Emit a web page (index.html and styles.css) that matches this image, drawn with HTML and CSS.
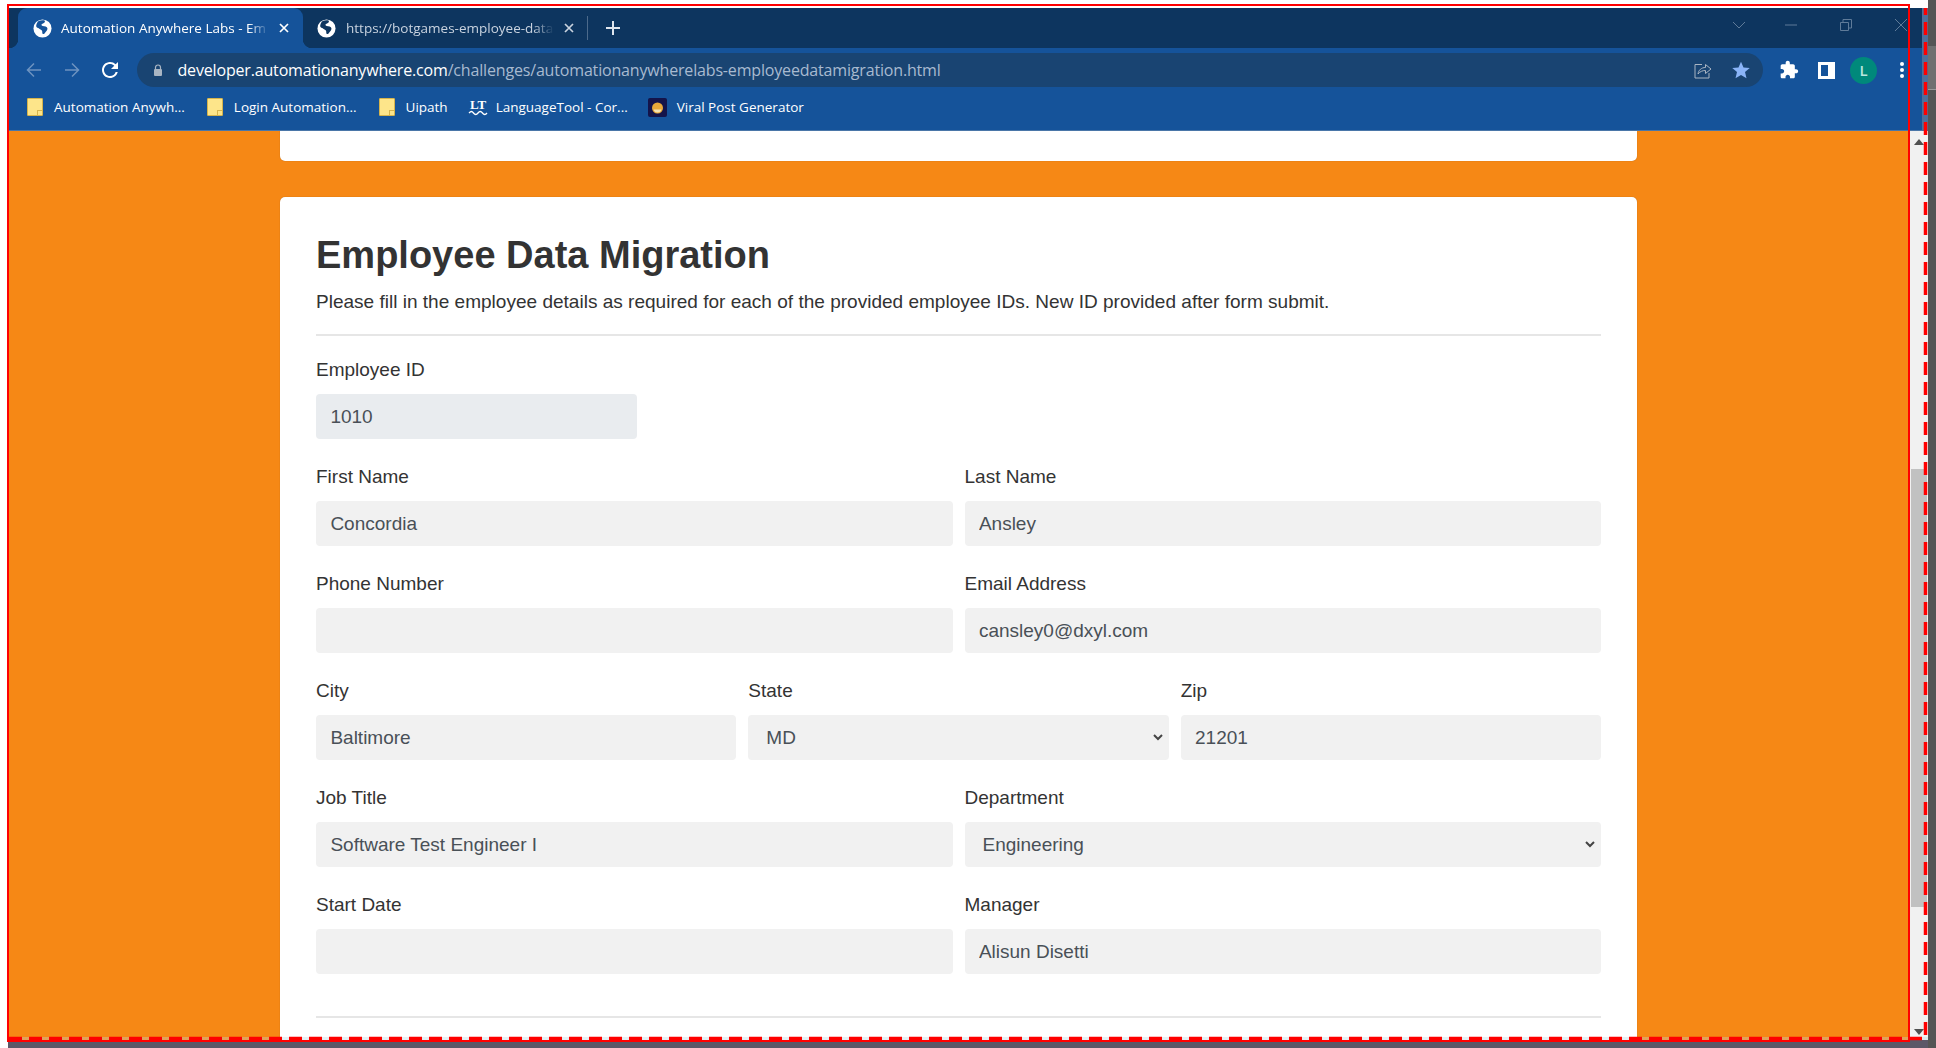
FILE: index.html
```html
<!DOCTYPE html>
<html lang="en">
<head>
  <meta charset="UTF-8">
  <title>Automation Anywhere Labs - Employee Data Migration</title>
  <link rel="stylesheet" href="styles.css">
</head>
<body>
  <div id="screen">
    <div id="desktop">
      <div id="window">
        <div id="chrome-row">
          <div id="chrome">
            <div id="tabstrip">
              <div class="tab active">
                <svg class="globe" viewBox="0 0 20 20"><circle cx="10" cy="10" r="9.5" fill="#fff"/><path d="M6 2.2c2-1 5-1 6.500-.4.500 1.500-1.200 2.800-2.500 3.200-1.500.4-1.500 1.900.2 2.300 2 .4 4.700.5 5 2.500.3 2-1.500 3.200-2.500 4.700-.6 1-1.400 1.700-2.300 1.200-.9-.6-.5-2-.8-3.200-.3-1.300-2-1.500-3-2.300-1.200-.9-3.200-1-3.300-2.800C3.700 5 4.500 3.200 6 2.200z" fill="#15539a"/></svg>
                <span class="tab-title">Automation Anywhere Labs - Em</span>
                <svg class="tab-close" viewBox="0 0 12 12"><path d="M2 2l8 8M10 2l-8 8" stroke="#fff" stroke-width="1.700"/></svg>
              </div>
              <div class="tab">
                <svg class="globe" viewBox="0 0 20 20"><circle cx="10" cy="10" r="9.500" fill="#fff"/><path d="M6 2.200c2-1 5-1 6.500-.4.500 1.500-1.200 2.800-2.500 3.200-1.500.4-1.500 1.900.2 2.300 2 .4 4.700.5 5 2.500.3 2-1.500 3.200-2.500 4.700-.6 1-1.400 1.700-2.300 1.200-.9-.6-.5-2-.8-3.200-.3-1.300-2-1.500-3-2.300-1.200-.9-3.200-1-3.300-2.800C3.700 5 4.500 3.200 6 2.200z" fill="#0d355f"/></svg>
                <span class="tab-title">https://botgames-employee-data</span>
                <svg class="tab-close" viewBox="0 0 12 12"><path d="M2 2l8 8M10 2l-8 8" stroke="#c9d3df" stroke-width="1.700"/></svg>
              </div>
              <div class="tab-divider"></div>
              <svg class="new-tab" viewBox="0 0 14 14"><path d="M7 0v14M0 7h14" stroke="#dfe6ee" stroke-width="2"/></svg>
              <div class="win-controls">
                <svg viewBox="0 0 14 8" class="win-chevron"><path d="M1 1l6 6 6-6" fill="none" stroke="#5f7b99" stroke-width="1"/></svg>
                <svg viewBox="0 0 12 12" class="win-btn"><path d="M0 6h12" stroke="#5f7b99" stroke-width="1"/></svg>
                <svg viewBox="0 0 12 12" class="win-btn"><path d="M.5 3.500h8v8h-8zM3 3.500V.5h8.500V9H8.500" fill="none" stroke="#5f7b99" stroke-width="1"/></svg>
                <svg viewBox="0 0 12 12" class="win-btn"><path d="M0 0l12 12M12 0L0 12" stroke="#5f7b99" stroke-width="1"/></svg>
              </div>
            </div>

            <div id="toolbar">
              <svg class="nav-icon" viewBox="0 0 16 16"><path d="M15 8H2M8 1.500L1.500 8 8 14.500" fill="none" stroke="#6d93c0" stroke-width="1.500"/></svg>
              <svg class="nav-icon" viewBox="0 0 16 16"><path d="M1 8h13M8 1.500L14.500 8 8 14.500" fill="none" stroke="#6d93c0" stroke-width="1.500"/></svg>
              <svg class="nav-icon reload" viewBox="0 0 24 24"><path d="M17.650 6.350A7.958 7.958 0 0 0 12 4c-4.420 0-7.990 3.580-7.990 8s3.570 8 7.990 8c3.730 0 6.840-2.550 7.730-6h-2.080A5.990 5.990 0 0 1 12 18c-3.310 0-6-2.690-6-6s2.690-6 6-6c1.660 0 3.140.69 4.220 1.780L13 11h7V4l-2.350 2.350z" fill="#fff"/></svg>
              <div id="omnibox">
                <svg class="lock" viewBox="0 0 10 12"><path d="M2.500 5V3.500a2.500 2.500 0 0 1 5 0V5" fill="none" stroke="#a9b5c3" stroke-width="1.200"/><rect x="1" y="5" width="8" height="7" rx="1" fill="#a9b5c3"/></svg>
                <span class="url"><span class="url-host">developer.automationanywhere.com</span>/challenges/automationanywherelabs-employeedatamigration.html</span>
                <svg class="share" viewBox="0 0 18 17"><path d="M8 2.500H1v13.500h14v-5" fill="none" stroke="#a9b5c3" stroke-width="1"/><path d="M4 12c.5-4 3.500-6.500 7.500-6.500V2.500L17 7l-5.500 4.500V8.500C8.500 8.500 6 9.500 4 12z" fill="none" stroke="#a9b5c3" stroke-width="1"/></svg>
                <svg class="star" viewBox="0 0 24 24"><path d="M12 2l3 7 7.500.6-5.700 4.900 1.800 7.400L12 18l-6.600 3.900 1.800-7.400L1.500 9.600 9 9z" fill="#8ab4f8"/></svg>
              </div>
              <svg class="puzzle" viewBox="0 0 24 24"><path d="M20.500 11H19V7c0-1.100-.9-2-2-2h-4V3.500C13 2.120 11.880 1 10.500 1S8 2.120 8 3.500V5H4c-1.100 0-1.990.9-1.990 2v3.800H3.500c1.490 0 2.700 1.210 2.700 2.700s-1.210 2.700-2.700 2.700H2V20c0 1.100.9 2 2 2h3.800v-1.500c0-1.490 1.210-2.700 2.700-2.700 1.490 0 2.700 1.210 2.700 2.700V22H17c1.100 0 2-.9 2-2v-4h1.500c1.380 0 2.500-1.120 2.500-2.500S21.880 11 20.500 11z" fill="#fff"/></svg>
              <div class="side-panel"></div>
              <div class="avatar">L</div>
              <div class="menu-dots"><span></span><span></span><span></span></div>
            </div>

            <div id="bookmarks">
              <a class="bookmark"><span class="folder"></span>Automation Anywh...</a>
              <a class="bookmark"><span class="folder"></span>Login Automation...</a>
              <a class="bookmark"><span class="folder"></span>Uipath</a>
              <a class="bookmark bookmark-lt">
                <svg class="lt-icon" viewBox="0 0 20 18"><text x="10" y="11" text-anchor="middle" class="lt-text">LT</text><path d="M1 15c2-2 3-2 4.500 0s3 2 4.500 0 3-2 4.500 0 3 2 4.500 0" fill="none" stroke="#fff" stroke-width="1.300"/></svg>
                LanguageTool - Cor...
              </a>
              <a class="bookmark bookmark-viral">
                <svg class="viral-icon" viewBox="0 0 19 19"><rect width="19" height="19" rx="2" fill="#14144a"/><circle cx="9.500" cy="10" r="5.500" fill="#e9a93a"/><path d="M5.500 11.500h8c-.5 2-2 3-4 3s-3.500-1-4-3z" fill="#f5e3b0"/></svg>
                Viral Post Generator
              </a>
            </div>
          </div>
          <div id="chrome-edge"></div>
        </div>

        <div id="viewport">
          <div id="page">
            <div class="card card-stub"></div>
            <div class="card">
              <h1>Employee Data Migration</h1>
              <p class="lead">Please fill in the employee details as required for each of the provided employee IDs. New ID provided after form submit.</p>
              <hr>
              <form>
                <div class="form-row">
                  <div class="field quarter">
                    <label>Employee ID</label>
                    <input class="readonly" type="text" value="1010" readonly>
                  </div>
                </div>
                <div class="form-row">
                  <div class="field"><label>First Name</label><input type="text" value="Concordia"></div>
                  <div class="field"><label>Last Name</label><input type="text" value="Ansley"></div>
                </div>
                <div class="form-row">
                  <div class="field"><label>Phone Number</label><input type="text"></div>
                  <div class="field"><label>Email Address</label><input type="text" value="cansley0@dxyl.com"></div>
                </div>
                <div class="form-row">
                  <div class="field"><label>City</label><input type="text" value="Baltimore"></div>
                  <div class="field"><label>State</label><select><option>MD</option></select></div>
                  <div class="field"><label>Zip</label><input type="text" value="21201"></div>
                </div>
                <div class="form-row">
                  <div class="field"><label>Job Title</label><input type="text" value="Software Test Engineer I"></div>
                  <div class="field"><label>Department</label><select><option>Engineering</option></select></div>
                </div>
                <div class="form-row">
                  <div class="field"><label>Start Date</label><input type="text"></div>
                  <div class="field"><label>Manager</label><input type="text" value="Alisun Disetti"></div>
                </div>
              </form>
              <hr class="form-end">
            </div>
          </div>
          <div id="scrollbar">
            <span class="arrow-up"></span>
            <div class="thumb"></div>
            <span class="arrow-down"></span>
          </div>
          <div class="bottom-haze"></div>
        </div>
      </div>
      <div id="taskbar"></div>
    </div>
    <div id="screen-edge"><div class="edge-light"></div></div>
  </div>

  <!-- annotation outlines drawn over the capture -->
  <svg id="outlines" viewBox="0 0 1936 1048">
    <rect x="8" y="5" width="1901" height="1036" fill="none" stroke="#f00" stroke-width="2"/>
    <path d="M9 1038.500H1925.500V8" fill="none" stroke="#f00" stroke-width="3.500" stroke-dasharray="13 7"/>
  </svg>
</body>
</html>
```

FILE: styles.css
```css
* {
  box-sizing: border-box;
}

body {
  margin: 0;
  width: 1936px;
  height: 1048px;
  overflow: hidden;
  background: #fff;
  font-family: 'Liberation Sans', Arial, sans-serif;
  position: relative;
}

#screen {
  display: flex;
  height: 1048px;
}

#desktop {
  width: 1928px;
  padding-top: 8px;
  display: flex;
  flex-direction: column;
}

#window {
  margin-left: 9px;
  height: 1032px;
  display: flex;
  flex-direction: column;
  overflow: hidden;
}

#taskbar {
  flex: 1;
  margin-left: 8px;
  background: #5b5868;
}

#screen-edge {
  width: 8px;
  background: #555;
  padding-top: 46px;
}

.edge-light {
  height: 44px;
  background: #707070;
  border-bottom: 1px solid #999;
}

/* browser chrome */
#chrome-row {
  display: flex;
  height: 123px;
}

#chrome {
  flex: 1;
  display: flex;
  flex-direction: column;
  background: #15539a;
  font-family: 'Open Sans', 'Noto Sans', sans-serif;
}

#chrome-edge {
  width: 6px;
  background: #4d6f9b;
}

#tabstrip {
  height: 40px;
  background: #0d355f;
  display: flex;
  align-items: center;
  padding-left: 9px;
}

.tab {
  width: 285px;
  height: 40px;
  display: flex;
  align-items: center;
  padding-left: 14px;
  flex-shrink: 0;
  color: #c9d3df;
  position: relative;
}

.tab.active {
  background: #15539a;
  border-radius: 9px 9px 0 0;
  color: #fff;
  padding-left: 15px;
}

.tab.active::before,
.tab.active::after {
  content: "";
  position: absolute;
  bottom: 0;
  width: 9px;
  height: 9px;
}

.tab.active::before {
  left: -9px;
  background: radial-gradient(circle at 0 0, #0d355f 9px, #15539a 9.5px);
}

.tab.active::after {
  right: -9px;
  background: radial-gradient(circle at 100% 0, #0d355f 9px, #15539a 9.5px);
}

.tab + .tab {
  width: 284px;
  padding-left: 14px;
}

.globe {
  width: 19px;
  height: 19px;
  flex-shrink: 0;
}

.tab-title {
  width: 208px;
  margin-left: 9px;
  font-size: 13.5px;
  white-space: nowrap;
  overflow: hidden;
  mask-image: linear-gradient(to right, #000 90%, transparent);
}

.tab + .tab .tab-title {
  margin-left: 10px;
}

.tab-close {
  width: 12px;
  height: 12px;
  margin-left: 9px;
  flex-shrink: 0;
}

.tab-divider {
  width: 1px;
  height: 24px;
  background: #4c6a8b;
}

.new-tab {
  width: 14px;
  height: 14px;
  margin-left: 18px;
}

.win-controls {
  margin-left: auto;
  display: flex;
  align-items: center;
  padding-right: 15px;
  gap: 43px;
  margin-top: -6px;
}

.win-chevron {
  width: 14px;
  height: 8px;
  margin-right: -4px;
}

.win-btn {
  width: 12px;
  height: 12px;
}

#toolbar {
  height: 39px;
  display: flex;
  align-items: center;
  padding: 5px 0 0 17px;
}

.nav-icon {
  width: 16px;
  height: 16px;
  margin-right: 22px;
  flex-shrink: 0;
}

.nav-icon.reload {
  width: 24px;
  height: 24px;
  margin: 0 0 0 -4px;
  flex-shrink: 0;
}

#omnibox {
  width: 1626px;
  height: 34px;
  margin-left: 15px;
  border-radius: 17px;
  background: #194472;
  display: flex;
  align-items: center;
  padding-left: 16px;
  flex-shrink: 0;
}

.lock {
  width: 10px;
  height: 12px;
  flex-shrink: 0;
}

.url {
  margin-left: 14.5px;
  font-size: 16px;
  letter-spacing: -0.17px;
  color: #a8bad0;
  white-space: nowrap;
}

.url-host {
  color: #fff;
}

.share {
  width: 18px;
  height: 17px;
  margin-left: auto;
}

.star {
  width: 20px;
  height: 20px;
  margin: 0 12px 0 19px;
}

.puzzle {
  width: 20px;
  height: 20px;
  margin-left: 16px;
  flex-shrink: 0;
}

.side-panel {
  width: 17px;
  height: 17px;
  margin-left: 19px;
  border: 3px solid #fff;
  border-right-width: 7px;
  flex-shrink: 0;
}

.avatar {
  width: 27px;
  height: 27px;
  margin-left: 15px;
  border-radius: 50%;
  background: #00897b;
  color: #b9e6df;
  font-size: 15px;
  font-weight: 600;
  text-align: center;
  line-height: 27px;
  flex-shrink: 0;
}

.menu-dots {
  margin-left: 23px;
  display: flex;
  flex-direction: column;
  gap: 2px;
}

.menu-dots span {
  width: 4px;
  height: 4px;
  border-radius: 50%;
  background: #fff;
}

#bookmarks {
  height: 44px;
  display: flex;
  align-items: center;
  padding: 0 0 3px 18px;
  border-bottom: 1px solid #4a76a8;
  gap: 22px;
}

.bookmark {
  display: flex;
  align-items: center;
  gap: 11px;
  font-size: 13.5px;
  color: #fff;
  white-space: nowrap;
}

.bookmark-lt {
  margin-left: -2px;
  gap: 8px;
}

.bookmark-viral {
  margin-left: -2px;
  gap: 10px;
}

.folder {
  width: 16px;
  height: 18px;
  background: #fde58a;
  border: 1px solid #d6b44c;
  border-radius: 1px;
  flex-shrink: 0;
  position: relative;
}

.folder::after {
  content: "";
  position: absolute;
  right: 0;
  bottom: 0;
  width: 4px;
  height: 4px;
  border-left: 1px solid #d6b44c;
  border-top: 1px solid #d6b44c;
}

.lt-icon {
  width: 20px;
  height: 18px;
}

.lt-text {
  font-family: 'Liberation Serif', serif;
  font-size: 13px;
  font-weight: 700;
  fill: #fff;
}

.viral-icon {
  width: 19px;
  height: 19px;
}

/* page */
#viewport {
  flex: 1;
  display: flex;
  position: relative;
  min-height: 0;
}

#page {
  flex: 1;
  background: #f68815;
  overflow: hidden;
  padding-left: 271px;
}

.card {
  width: 1357px;
  background: #fff;
  border-radius: 5px;
  padding: 36px;
  color: #333;
  box-shadow: 0 0 1px rgba(0, 0, 0, 0.35);
}

.card-stub {
  height: 30px;
  padding: 0;
  border-radius: 0 0 5px 5px;
  margin-bottom: 36px;
}

h1 {
  margin: 1px 0 0;
  font-size: 38px;
  line-height: 42px;
  font-weight: 700;
}

.lead {
  margin: 13px 0 0;
  font-size: 19.04px;
  line-height: 26px;
}

hr {
  margin: 19px 0 20px;
  border: 0;
  border-top: 2px solid #e6e6e6;
}

.form-end {
  margin: 42px 0 0;
}

.form-row {
  display: flex;
  gap: 12px;
  margin-bottom: 24px;
}

.field {
  flex: 1;
  min-width: 0;
}

.field.quarter {
  flex: 0 0 321px;
}

label {
  display: block;
  padding-top: 1px;
  margin-bottom: 11px;
  font-size: 19px;
  line-height: 26px;
}

input,
select {
  display: block;
  width: 100%;
  height: 45px;
  border: 0;
  border-radius: 4px;
  background-color: #f1f1f1;
  color: #495057;
  font-family: inherit;
  font-size: 19px;
  padding: 0 14.4px;
}

select {
  padding: 0 0 0 18px;
  appearance: none;
  background-image: url("data:image/svg+xml,%3Csvg xmlns='http://www.w3.org/2000/svg' width='10' height='7'%3E%3Cpath d='M1 1l4 4 4-4' fill='none' stroke='%23444' stroke-width='2'/%3E%3C/svg%3E");
  background-repeat: no-repeat;
  background-position: right 6px center;
}

input.readonly {
  background-color: #e9ecef;
}

#scrollbar {
  width: 18px;
  background: #f1f1f1;
  display: flex;
  flex-direction: column;
  align-items: center;
  padding: 8px 1px 5px 0;
  position: relative;
}

.thumb {
  position: absolute;
  top: 338px;
  left: 1px;
  width: 16px;
  height: 438px;
  background: #c1c1c1;
}

.arrow-up,
.arrow-down {
  width: 0;
  height: 0;
  border-left: 5px solid transparent;
  border-right: 5px solid transparent;
}

.arrow-up {
  border-bottom: 6px solid #505050;
}

.arrow-down {
  margin-top: auto;
  border-top: 6px solid #505050;
}

.bottom-haze {
  position: absolute;
  left: 0;
  right: 0;
  bottom: 0;
  height: 3px;
  background: rgba(184, 216, 224, 0.35);
}

#outlines {
  position: absolute;
  left: 0;
  top: 0;
  width: 1936px;
  height: 1048px;
  pointer-events: none;
}
```
